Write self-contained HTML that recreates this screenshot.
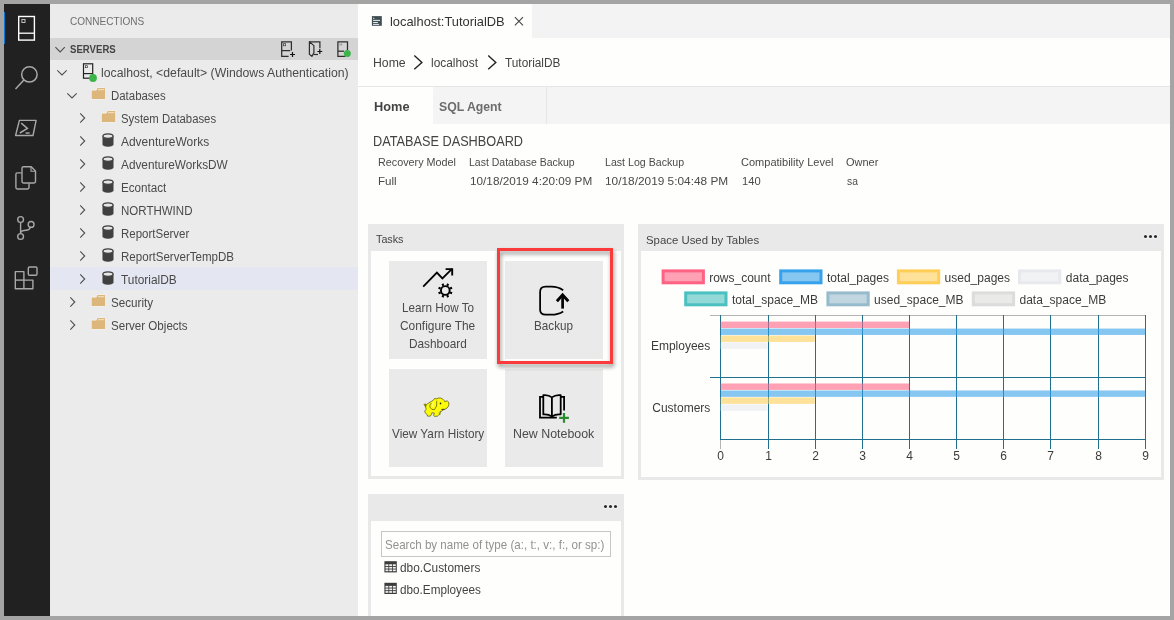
<!DOCTYPE html>
<html lang="en">
<head>
<meta charset="utf-8">
<title>Azure Data Studio - localhost:TutorialDB</title>
<style>
html,body{margin:0;padding:0;}
body{width:1174px;height:620px;overflow:hidden;background:#a4a4a4;font-family:"Liberation Sans",sans-serif;position:relative;}
#app{position:absolute;left:0;top:0;width:1174px;height:620px;overflow:hidden;}
.abs{position:absolute;}
.t{position:absolute;white-space:nowrap;line-height:20px;height:20px;transform-origin:0 50%;font-family:"Liberation Sans",sans-serif;}
svg{position:absolute;overflow:visible;}
</style>
</head>
<body>
<div id="app">
<div class="abs" style="left:4px;top:4px;width:1166px;height:612px;background:#fefefd;"></div>

<!-- activity bar -->
<div class="abs" style="left:4px;top:4px;width:46px;height:612px;background:#212121;"></div>
<div class="abs" style="left:4px;top:12px;width:1.3px;height:32px;background:#0a7ad6;"></div>
<svg width="46" height="300" style="left:4px;top:4px;" viewBox="4 4 46 300" fill="none">
  <!-- server (active) -->
  <rect x="18.7" y="16.5" width="15.7" height="23.6" stroke="#ffffff" stroke-width="1.4"/>
  <line x1="18.7" y1="33.2" x2="34.4" y2="33.2" stroke="#ffffff" stroke-width="1.3"/>
  <rect x="21.9" y="19.4" width="3.1" height="3.1" stroke="#d0d0d0" stroke-width="0.9"/>
  <!-- search -->
  <circle cx="29.4" cy="74.4" r="7.7" stroke="#a8a8a8" stroke-width="1.5"/>
  <line x1="23.9" y1="80" x2="15.5" y2="89" stroke="#a8a8a8" stroke-width="1.5"/>
  <!-- terminal -->
  <path d="M19.4 120.4 H36.1 L33 135.5 H15.6 Z" stroke="#a8a8a8" stroke-width="1.4" stroke-linejoin="round"/>
  <path d="M21.2 123.2 L27.4 128.3 L19.8 133" stroke="#a8a8a8" stroke-width="1.5"/>
  <line x1="25.6" y1="133" x2="29.6" y2="133" stroke="#a8a8a8" stroke-width="1.5"/>
  <!-- files -->
  <path d="M21.8 172.9 H17.3 Q15.9 172.9 15.9 174.3 V187.6 Q15.9 189 17.3 189 H27.6 Q29 189 29 187.6 V183.5" stroke="#a8a8a8" stroke-width="1.4"/>
  <path d="M23.4 166.8 H31.2 L35.5 171.1 V181.6 Q35.5 183 34.1 183 H23.4 Q22 183 22 181.6 V168.2 Q22 166.8 23.4 166.8 Z" stroke="#a8a8a8" stroke-width="1.4"/>
  <path d="M31 167 V171.3 H35.3" stroke="#a8a8a8" stroke-width="1.1"/>
  <!-- git -->
  <circle cx="20.6" cy="219.5" r="2.9" stroke="#a8a8a8" stroke-width="1.4"/>
  <circle cx="20.6" cy="236.5" r="2.9" stroke="#a8a8a8" stroke-width="1.4"/>
  <circle cx="31.1" cy="224.4" r="2.9" stroke="#a8a8a8" stroke-width="1.4"/>
  <line x1="20.6" y1="222.4" x2="20.6" y2="233.6" stroke="#a8a8a8" stroke-width="1.4"/>
  <path d="M30.3 227.3 Q29.6 230.2 26 230.3 Q21.5 230.5 20.6 232.4" stroke="#a8a8a8" stroke-width="1.4"/>
  <!-- extensions -->
  <path d="M15.3 271.6 H23.9 V280.1 H32.9 V288.7 H15.3 Z" stroke="#a8a8a8" stroke-width="1.4" stroke-linejoin="round"/>
  <line x1="15.3" y1="280.1" x2="23.9" y2="280.1" stroke="#a8a8a8" stroke-width="1.4"/>
  <line x1="23.9" y1="280.1" x2="23.9" y2="288.7" stroke="#a8a8a8" stroke-width="1.4"/>
  <rect x="28.3" y="267" width="8.7" height="8.2" rx="1.2" stroke="#a8a8a8" stroke-width="1.4"/>
</svg>

<!-- sidebar -->
<div class="abs" style="left:50px;top:4px;width:308px;height:612px;background:#ebebeb;"></div>
<div class="abs" style="left:50px;top:38px;width:308px;height:22px;background:#d4d4d4;"></div>
<div class="abs" style="left:50px;top:267px;width:308px;height:23px;background:#e4e6f1;"></div>
<svg width="308" height="612" style="left:50px;top:4px;" viewBox="50 4 308 612" fill="none">
<path d="M55.4 47.2 L60.1 52.0 L64.8 47.2" stroke="#4f4f4f" stroke-width="1.1" fill="none"/>
<path d="M291.4 50.4 V41.9 H281.7 V56.3 H288.6" stroke="#2e2e2e" stroke-width="1.25" fill="none"/>
<line x1="281.7" y1="50.6" x2="290.2" y2="50.6" stroke="#2e2e2e" stroke-width="1.25"/>
<rect x="283.6" y="43.7" width="2.1" height="2.1" stroke="#2e2e2e" stroke-width="0.6" fill="none"/>
<path d="M290 54.5 H295 M292.5 52 V57" stroke="#111" stroke-width="1.2"/>
<path d="M309.4 41.9 H319.9 V48.2" stroke="#2e2e2e" stroke-width="1.25" fill="none"/>
<path d="M309.4 41.7 L313.9 45.6 V52.8 L311.9 56.4 L309.4 54.3 Z" stroke="#2e2e2e" stroke-width="1.2" fill="none" stroke-linejoin="round"/>
<path d="M313.6 54.5 H318" stroke="#2e2e2e" stroke-width="1.2"/>
<path d="M317.4 51.5 H322.2 M319.8 49.1 V53.9" stroke="#111" stroke-width="1.2"/>
<path d="M345.4 56.4 H337.9 V41.9 H347.5 V50" stroke="#2e2e2e" stroke-width="1.25" fill="none"/>
<line x1="337.9" y1="51.2" x2="344" y2="51.2" stroke="#2e2e2e" stroke-width="1.25"/>
<path d="M340 43.6 V45.4 M341.6 43.6 V45.4" stroke="#555" stroke-width="0.6"/>
<circle cx="347.3" cy="53.6" r="3.5" fill="#3bb44a"/>
<path d="M57.3 70.4 L62.0 75.0 L66.7 70.4" stroke="#4f4f4f" stroke-width="1.1" fill="none"/>
<rect x="83.5" y="63.8" width="9.2" height="14.4" stroke="#232323" stroke-width="1.2" fill="none"/>
<line x1="83.5" y1="73.6" x2="92.7" y2="73.6" stroke="#232323" stroke-width="1.2"/>
<rect x="85.4" y="65.7" width="2" height="2" stroke="#232323" stroke-width="0.6" fill="none"/>
<circle cx="93" cy="78" r="3.9" fill="#3bb44a"/>
<path d="M67.3 93.4 L72.0 98.0 L76.7 93.4" stroke="#4f4f4f" stroke-width="1.1" fill="none"/>
<path d="M91.7 90.4 H96.3 L97.5 88.0 H105.1 V99.0 H91.7 Z" fill="#dcb67a" stroke="#f8f5ef" stroke-width="1.1" paint-order="stroke"/>
<line x1="98.1" y1="89.7" x2="104.3" y2="89.7" stroke="#f8ead2" stroke-width="0.9"/>
<path d="M80.2 113.4 L84.7 118.0 L80.2 122.6" stroke="#4f4f4f" stroke-width="1.1" fill="none"/>
<path d="M101.8 113.4 H106.4 L107.6 111.0 H115.2 V122.0 H101.8 Z" fill="#dcb67a" stroke="#f8f5ef" stroke-width="1.1" paint-order="stroke"/>
<line x1="108.2" y1="112.7" x2="114.4" y2="112.7" stroke="#f8ead2" stroke-width="0.9"/>
<path d="M80.2 136.4 L84.7 141.0 L80.2 145.6" stroke="#4f4f4f" stroke-width="1.1" fill="none"/>
<path d="M102.2 135.9 V144.3 A5.8 2.8 0 0 0 113.8 144.3 V135.9 Z" fill="#404040" stroke="#f0f0f0" stroke-width="0.5"/>
<ellipse cx="108.0" cy="136.1" rx="5.1" ry="2.3" fill="#e6e6e6" stroke="#404040" stroke-width="1.3"/>
<path d="M80.2 159.4 L84.7 164.0 L80.2 168.6" stroke="#4f4f4f" stroke-width="1.1" fill="none"/>
<path d="M102.2 158.9 V167.3 A5.8 2.8 0 0 0 113.8 167.3 V158.9 Z" fill="#404040" stroke="#f0f0f0" stroke-width="0.5"/>
<ellipse cx="108.0" cy="159.1" rx="5.1" ry="2.3" fill="#e6e6e6" stroke="#404040" stroke-width="1.3"/>
<path d="M80.2 182.4 L84.7 187.0 L80.2 191.6" stroke="#4f4f4f" stroke-width="1.1" fill="none"/>
<path d="M102.2 181.9 V190.3 A5.8 2.8 0 0 0 113.8 190.3 V181.9 Z" fill="#404040" stroke="#f0f0f0" stroke-width="0.5"/>
<ellipse cx="108.0" cy="182.1" rx="5.1" ry="2.3" fill="#e6e6e6" stroke="#404040" stroke-width="1.3"/>
<path d="M80.2 205.4 L84.7 210.0 L80.2 214.6" stroke="#4f4f4f" stroke-width="1.1" fill="none"/>
<path d="M102.2 204.9 V213.3 A5.8 2.8 0 0 0 113.8 213.3 V204.9 Z" fill="#404040" stroke="#f0f0f0" stroke-width="0.5"/>
<ellipse cx="108.0" cy="205.1" rx="5.1" ry="2.3" fill="#e6e6e6" stroke="#404040" stroke-width="1.3"/>
<path d="M80.2 228.4 L84.7 233.0 L80.2 237.6" stroke="#4f4f4f" stroke-width="1.1" fill="none"/>
<path d="M102.2 227.9 V236.3 A5.8 2.8 0 0 0 113.8 236.3 V227.9 Z" fill="#404040" stroke="#f0f0f0" stroke-width="0.5"/>
<ellipse cx="108.0" cy="228.1" rx="5.1" ry="2.3" fill="#e6e6e6" stroke="#404040" stroke-width="1.3"/>
<path d="M80.2 251.4 L84.7 256.0 L80.2 260.6" stroke="#4f4f4f" stroke-width="1.1" fill="none"/>
<path d="M102.2 250.9 V259.3 A5.8 2.8 0 0 0 113.8 259.3 V250.9 Z" fill="#404040" stroke="#f0f0f0" stroke-width="0.5"/>
<ellipse cx="108.0" cy="251.1" rx="5.1" ry="2.3" fill="#e6e6e6" stroke="#404040" stroke-width="1.3"/>
<path d="M80.2 274.4 L84.7 279.0 L80.2 283.6" stroke="#4f4f4f" stroke-width="1.1" fill="none"/>
<path d="M102.2 273.9 V282.3 A5.8 2.8 0 0 0 113.8 282.3 V273.9 Z" fill="#404040" stroke="#f0f0f0" stroke-width="0.5"/>
<ellipse cx="108.0" cy="274.1" rx="5.1" ry="2.3" fill="#e6e6e6" stroke="#404040" stroke-width="1.3"/>
<path d="M70.3 297.4 L74.8 302.0 L70.3 306.6" stroke="#4f4f4f" stroke-width="1.1" fill="none"/>
<path d="M91.7 297.4 H96.3 L97.5 295.0 H105.1 V306.0 H91.7 Z" fill="#dcb67a" stroke="#f8f5ef" stroke-width="1.1" paint-order="stroke"/>
<line x1="98.1" y1="296.7" x2="104.3" y2="296.7" stroke="#f8ead2" stroke-width="0.9"/>
<path d="M70.3 320.4 L74.8 325.0 L70.3 329.6" stroke="#4f4f4f" stroke-width="1.1" fill="none"/>
<path d="M91.7 320.4 H96.3 L97.5 318.0 H105.1 V329.0 H91.7 Z" fill="#dcb67a" stroke="#f8f5ef" stroke-width="1.1" paint-order="stroke"/>
<line x1="98.1" y1="319.7" x2="104.3" y2="319.7" stroke="#f8ead2" stroke-width="0.9"/>
</svg>

<!-- editor chrome -->
<div class="abs" style="left:358px;top:4px;width:812px;height:34px;background:#f3f3f3;"></div>
<div class="abs" style="left:358px;top:4px;width:174px;height:34px;background:#fefefd;"></div>
<div class="abs" style="left:358px;top:86px;width:812px;height:1px;background:#e6e6e6;"></div>
<div class="abs" style="left:358px;top:87px;width:812px;height:37px;background:#f4f4f4;"></div>
<div class="abs" style="left:358px;top:87px;width:75px;height:37px;background:#fefefd;"></div>
<div class="abs" style="left:546px;top:87px;width:1px;height:37px;background:#e6e6e6;"></div>
<svg width="812" height="120" style="left:358px;top:4px;" viewBox="358 4 812 120" fill="none">
  <!-- tab icon -->
  <rect x="371.9" y="16.1" width="9.9" height="9.7" fill="#3f4d54"/>
  <path d="M373.1 18.3 H374.4 M373.1 20.4 H380 M373.1 22.5 H377.8 M373.1 24.4 H379.1" stroke="#ffffff" stroke-width="0.9"/>
  <!-- close x -->
  <path d="M514.9 17.2 L523 25.3 M523 17.2 L514.9 25.3" stroke="#444" stroke-width="1.1"/>
  <!-- breadcrumb chevrons -->
  <path d="M414.3 55.6 L421.9 62.4 L414.3 69.2" stroke="#222" stroke-width="1.4"/>
  <path d="M488.2 55.6 L495.8 62.4 L488.2 69.2" stroke="#222" stroke-width="1.4"/>
</svg>

<!-- tasks card -->
<div class="abs" style="left:368px;top:224px;width:256px;height:255px;background:#e9e9e9;"></div>
<div class="abs" style="left:371px;top:251px;width:250px;height:225px;background:#fefefd;"></div>
<div class="abs" style="left:389px;top:261px;width:98px;height:98px;background:#eaeaea;"></div>
<div class="abs" style="left:505px;top:261px;width:98px;height:98px;background:#eaeaea;"></div>
<div class="abs" style="left:389px;top:369px;width:98px;height:98px;background:#eaeaea;"></div>
<div class="abs" style="left:505px;top:369px;width:98px;height:98px;background:#eaeaea;"></div>
<svg width="256" height="255" style="left:368px;top:224px;" viewBox="368 224 256 255" fill="none">
<path d="M423.2 286.6 L436.9 272.6 L442.4 278.4 L452 268.9" stroke="#000" stroke-width="1.8" fill="none" stroke-linejoin="miter"/>
<path d="M445.6 269.1 H452.2 V275.5" stroke="#000" stroke-width="1.9" fill="none"/>
<circle cx="445.3" cy="290.5" r="4.35" stroke="#000" stroke-width="1.9" fill="none"/>
<path d="M450.01 292.45 L452.04 293.29 M447.25 295.21 L448.09 297.24 M443.35 295.21 L442.51 297.24 M440.59 292.45 L438.56 293.29 M440.59 288.55 L438.56 287.71 M443.35 285.79 L442.51 283.76 M447.25 285.79 L448.09 283.76 M450.01 288.55 L452.04 287.71" stroke="#000" stroke-width="2.1"/>
<path d="M563.2 290.3 Q558 286.7 551.5 286.7 H545.6 Q540.1 286.7 540.1 292 V309.8 Q540.1 314.7 545.6 314.7 H551.5 Q558 314.7 563.2 311.4" stroke="#000" stroke-width="1.75" fill="none"/>
<path d="M562.6 308.6 V296" stroke="#000" stroke-width="2.7" fill="none"/>
<path d="M556.9 301.3 L562.6 294.9 L568.3 301.3" stroke="#000" stroke-width="2.9" fill="none" stroke-linejoin="miter"/>
<path d="M423.36 403.89 L426.07 403.44 L426.18 406.94 L424.94 406.71 Z" fill="#8a8a14"/>
<path d="M426.18 404.79 L428.27 403.27 L431.09 401.58 L433.18 400.39 L434.54 398.47 L436.74 398.81 L438.43 398.02 L440.69 398.02 L442.67 399.03 L444.08 400.45 L444.81 401.74 L445.94 401.07 L447.47 401.07 L448.65 402.14 L448.88 404.23 L448.31 406.37 L446.90 408.18 L444.93 409.25 L443.23 409.20 L441.99 409.54 L442.67 410.44 L441.54 411.34 L440.18 411.51 L440.30 412.70 L439.84 414.39 L438.72 414.96 L437.59 416.09 L434.48 416.43 L433.52 415.13 L434.48 413.26 L431.94 412.70 L431.37 414.39 L430.36 416.09 L427.70 416.20 L426.97 414.39 L425.05 412.70 L424.71 411.01 L426.18 409.31 L425.62 406.94 Z" fill="#fdfb0a" stroke="#4e4e08" stroke-width="0.7" stroke-linejoin="round"/>
<path d="M436.80 400.73 Q437.47 406.94 434.48 409.65 Q431.49 410.44 429.79 406.94 Q429.57 404.79 431.37 403.10" stroke="#4e4e08" stroke-width="0.7" fill="none"/>
<path d="M433.63 401.29 Q431.94 404.12 433.07 406.94" stroke="#fffdb0" stroke-width="0.8" fill="none"/>
<circle cx="440.52" cy="403.44" r="0.85" fill="#222"/>
<path d="M441.43 409.65 L444.47 409.54" stroke="#222" stroke-width="0.8"/>
<path d="M439.00 412.13 L439.84 414.39" stroke="#8a8a14" stroke-width="0.9"/>
<path d="M543.4 396.8 H540 V417.6 H556.8 M561 396.8 H564.1 V410.6" stroke="#000" stroke-width="1.8" fill="none"/>
<path d="M551.9 397.4 Q548.5 394.6 543.3 395.2 V414.4 Q548.5 413.9 551.9 416.6 Q555.4 413.9 560.7 414.4 V395.2 Q555.4 394.6 551.9 397.4 V416.4" stroke="#000" stroke-width="1.8" fill="none" stroke-linejoin="round"/>
<path d="M559.2 417.8 H568.9 M564 413 V422.7" stroke="#2b8a2b" stroke-width="2.2"/>
</svg>
<div class="abs" style="left:497px;top:248px;width:110px;height:110px;border:3px solid #fb3b3b;filter:drop-shadow(1.5px 3px 2.2px rgba(0,0,0,0.42));"></div>

<!-- chart card -->
<div class="abs" style="left:638px;top:224px;width:526px;height:256px;background:#e9e9e9;"></div>
<div class="abs" style="left:641px;top:251px;width:520px;height:226px;background:#fefefd;"></div>
<svg width="526" height="256" style="left:638px;top:224px;font-family:'Liberation Sans',sans-serif;will-change:transform;" viewBox="638 224 526 256">
<circle cx="1145.5" cy="236.45" r="1.55" fill="#2a2a2a" stroke="#f8f8f8" stroke-width="1.5" paint-order="stroke"/>
<circle cx="1150.5" cy="236.45" r="1.55" fill="#2a2a2a" stroke="#f8f8f8" stroke-width="1.5" paint-order="stroke"/>
<circle cx="1155.5" cy="236.45" r="1.55" fill="#2a2a2a" stroke="#f8f8f8" stroke-width="1.5" paint-order="stroke"/>
<rect x="663.1" y="270.9" width="40.3" height="11.9" fill="rgba(255,99,132,0.6)" stroke="rgb(255,99,132)" stroke-width="3"/>
<text x="709.2" y="282.0" font-size="12" fill="#3c3c3c">rows_count</text>
<rect x="780.7" y="270.9" width="40.3" height="11.9" fill="rgba(54,162,235,0.6)" stroke="rgb(54,162,235)" stroke-width="3"/>
<text x="826.9" y="282.0" font-size="12" fill="#3c3c3c">total_pages</text>
<rect x="898.4" y="270.9" width="40.3" height="11.9" fill="rgba(255,206,86,0.6)" stroke="rgb(255,206,86)" stroke-width="3"/>
<text x="944.6" y="282.0" font-size="12" fill="#3c3c3c">used_pages</text>
<rect x="1019.5" y="270.9" width="40.3" height="11.9" fill="rgba(231,233,237,0.6)" stroke="rgb(231,233,237)" stroke-width="3"/>
<text x="1065.8" y="282.0" font-size="12" fill="#3c3c3c">data_pages</text>
<rect x="685.7" y="292.9" width="40.3" height="11.9" fill="rgba(75,192,192,0.6)" stroke="rgb(75,192,192)" stroke-width="3"/>
<text x="731.9" y="304.2" font-size="12" fill="#3c3c3c">total_space_MB</text>
<rect x="827.9" y="292.9" width="40.3" height="11.9" fill="rgba(151,187,205,0.6)" stroke="rgb(151,187,205)" stroke-width="3"/>
<text x="874.1" y="304.2" font-size="12" fill="#3c3c3c">used_space_MB</text>
<rect x="973.3" y="292.9" width="40.3" height="11.9" fill="rgba(220,220,220,0.6)" stroke="rgb(220,220,220)" stroke-width="3"/>
<text x="1019.5" y="304.2" font-size="12" fill="#3c3c3c">data_space_MB</text>
<rect x="710" y="315" width="436" height="1" fill="#b4b4b4"/>
<rect x="710" y="377" width="436" height="1" fill="#1f6f8f"/>
<rect x="720" y="439" width="426" height="1" fill="#1f6f8f"/>
<rect x="720" y="315" width="1" height="125" fill="#1f6f8f"/>
<rect x="720" y="440" width="1" height="9" fill="#b4b4b4"/>
<text x="720.5" y="459.7" font-size="12" fill="#3c3c3c" text-anchor="middle">0</text>
<rect x="768" y="315" width="1" height="134" fill="#1f6f8f"/>
<text x="768.5" y="459.7" font-size="12" fill="#3c3c3c" text-anchor="middle">1</text>
<rect x="815" y="315" width="1" height="134" fill="#1f6f8f"/>
<text x="815.5" y="459.7" font-size="12" fill="#3c3c3c" text-anchor="middle">2</text>
<rect x="862" y="315" width="1" height="134" fill="#1f6f8f"/>
<text x="862.5" y="459.7" font-size="12" fill="#3c3c3c" text-anchor="middle">3</text>
<rect x="909" y="315" width="1" height="134" fill="#1f6f8f"/>
<text x="909.5" y="459.7" font-size="12" fill="#3c3c3c" text-anchor="middle">4</text>
<rect x="956" y="315" width="1" height="134" fill="#1f6f8f"/>
<text x="956.5" y="459.7" font-size="12" fill="#3c3c3c" text-anchor="middle">5</text>
<rect x="1003" y="315" width="1" height="134" fill="#1f6f8f"/>
<text x="1003.5" y="459.7" font-size="12" fill="#3c3c3c" text-anchor="middle">6</text>
<rect x="1050" y="315" width="1" height="134" fill="#1f6f8f"/>
<text x="1050.5" y="459.7" font-size="12" fill="#3c3c3c" text-anchor="middle">7</text>
<rect x="1098" y="315" width="1" height="134" fill="#1f6f8f"/>
<text x="1098.5" y="459.7" font-size="12" fill="#3c3c3c" text-anchor="middle">8</text>
<rect x="1145" y="315" width="1" height="134" fill="#1f6f8f"/>
<text x="1145.5" y="459.7" font-size="12" fill="#3c3c3c" text-anchor="middle">9</text>
<rect x="720.6" y="321.60" width="188.6" height="6.4" fill="rgba(255,99,132,0.6)"/>
<rect x="720.6" y="328.57" width="424.7" height="6.4" fill="rgba(54,162,235,0.6)"/>
<rect x="720.6" y="335.54" width="94.1" height="6.4" fill="rgba(255,206,86,0.6)"/>
<rect x="720.6" y="342.51" width="46.9" height="6.4" fill="rgba(231,233,237,0.6)"/>
<rect x="720.6" y="383.50" width="188.6" height="6.4" fill="rgba(255,99,132,0.6)"/>
<rect x="720.6" y="390.47" width="424.7" height="6.4" fill="rgba(54,162,235,0.6)"/>
<rect x="720.6" y="397.44" width="94.1" height="6.4" fill="rgba(255,206,86,0.6)"/>
<rect x="720.6" y="404.41" width="46.9" height="6.4" fill="rgba(231,233,237,0.6)"/>
<text x="710.3" y="350.1" font-size="12" fill="#3c3c3c" text-anchor="end">Employees</text>
<text x="710.3" y="411.9" font-size="12" fill="#3c3c3c" text-anchor="end">Customers</text>
</svg>

<!-- bottom card -->
<div class="abs" style="left:368px;top:494px;width:256px;height:122px;background:#e9e9e9;"></div>
<div class="abs" style="left:371px;top:521px;width:250px;height:95px;background:#fefefd;"></div>
<div class="abs" style="left:381px;top:531px;width:228px;height:24px;border:1px solid #c8c8c8;background:#fefefd;"></div>
<svg width="256" height="122" style="left:368px;top:494px;" viewBox="368 494 256 122" fill="none">
  <circle cx="605.5" cy="506.45" r="1.55" fill="#2a2a2a" stroke="#f8f8f8" stroke-width="1.5" paint-order="stroke"/><circle cx="610.5" cy="506.45" r="1.55" fill="#2a2a2a" stroke="#f8f8f8" stroke-width="1.5" paint-order="stroke"/><circle cx="615.5" cy="506.45" r="1.55" fill="#2a2a2a" stroke="#f8f8f8" stroke-width="1.5" paint-order="stroke"/>
  <g id="tbl1">
    <rect x="384.4" y="561.2" width="12.4" height="11.2" fill="#3c3c3c"/>
    <path d="M385.4 564.9 H395.8 M385.4 567.5 H395.8 M385.4 570.1 H395.8" stroke="#ffffff" stroke-width="0.0"/>
    <g fill="#f2f2f2">
      <rect x="385.5" y="564.3" width="2.9" height="1.7"/><rect x="389.2" y="564.3" width="2.9" height="1.7"/><rect x="392.9" y="564.3" width="2.9" height="1.7"/>
      <rect x="385.5" y="566.9" width="2.9" height="1.7"/><rect x="389.2" y="566.9" width="2.9" height="1.7"/><rect x="392.9" y="566.9" width="2.9" height="1.7"/>
      <rect x="385.5" y="569.5" width="2.9" height="1.7"/><rect x="389.2" y="569.5" width="2.9" height="1.7"/><rect x="392.9" y="569.5" width="2.9" height="1.7"/>
    </g>
  </g>
  <g transform="translate(0,21.6)">
    <rect x="384.4" y="561.2" width="12.4" height="11.2" fill="#3c3c3c"/>
    <g fill="#f2f2f2">
      <rect x="385.5" y="564.3" width="2.9" height="1.7"/><rect x="389.2" y="564.3" width="2.9" height="1.7"/><rect x="392.9" y="564.3" width="2.9" height="1.7"/>
      <rect x="385.5" y="566.9" width="2.9" height="1.7"/><rect x="389.2" y="566.9" width="2.9" height="1.7"/><rect x="392.9" y="566.9" width="2.9" height="1.7"/>
      <rect x="385.5" y="569.5" width="2.9" height="1.7"/><rect x="389.2" y="569.5" width="2.9" height="1.7"/><rect x="392.9" y="569.5" width="2.9" height="1.7"/>
    </g>
  </g>
</svg>

<!-- texts -->
<span class="t" id="t0" style="left:69.50px;top:11.0px;font-size:10.6px;color:#6f6f6f;transform:scaleX(0.9496);">CONNECTIONS</span>
<span class="t" id="t1" style="left:69.50px;top:39.0px;font-size:10.6px;color:#444444;font-weight:bold;transform:scaleX(0.9065);">SERVERS</span>
<span class="t" id="t2" style="left:100.50px;top:63.0px;font-size:12.0px;color:#4a4a4a;transform:scaleX(1.0201);">localhost, &lt;default&gt; (Windows Authentication)</span>
<span class="t" id="t3" style="left:110.60px;top:86.0px;font-size:12.0px;color:#4a4a4a;transform:scaleX(0.9525);">Databases</span>
<span class="t" id="t4" style="left:120.55px;top:109.0px;font-size:12.0px;color:#4a4a4a;transform:scaleX(0.9441);">System Databases</span>
<span class="t" id="t5" style="left:120.55px;top:132.0px;font-size:12.0px;color:#4a4a4a;transform:scaleX(0.9957);">AdventureWorks</span>
<span class="t" id="t6" style="left:120.55px;top:155.0px;font-size:12.0px;color:#4a4a4a;transform:scaleX(0.9843);">AdventureWorksDW</span>
<span class="t" id="t7" style="left:120.65px;top:178.0px;font-size:12.0px;color:#4a4a4a;transform:scaleX(0.9704);">Econtact</span>
<span class="t" id="t8" style="left:120.65px;top:201.0px;font-size:12.0px;color:#4a4a4a;transform:scaleX(0.9599);">NORTHWIND</span>
<span class="t" id="t9" style="left:120.65px;top:224.0px;font-size:12.0px;color:#4a4a4a;transform:scaleX(0.9575);">ReportServer</span>
<span class="t" id="t10" style="left:120.65px;top:247.0px;font-size:12.0px;color:#4a4a4a;transform:scaleX(0.9632);">ReportServerTempDB</span>
<span class="t" id="t11" style="left:120.55px;top:270.0px;font-size:12.0px;color:#4a4a4a;transform:scaleX(0.9893);">TutorialDB</span>
<span class="t" id="t12" style="left:110.55px;top:293.0px;font-size:12.0px;color:#4a4a4a;transform:scaleX(0.9719);">Security</span>
<span class="t" id="t13" style="left:110.55px;top:316.0px;font-size:12.0px;color:#4a4a4a;transform:scaleX(0.9656);">Server Objects</span>
<span class="t" id="t14" style="left:389.65px;top:11.8px;font-size:12.9px;color:#333333;transform:scaleX(0.9986);">localhost:TutorialDB</span>
<span class="t" id="t15" style="left:372.55px;top:52.5px;font-size:12.0px;color:#444444;transform:scaleX(1.0203);">Home</span>
<span class="t" id="t16" style="left:430.70px;top:52.5px;font-size:12.0px;color:#444444;transform:scaleX(0.9919);">localhost</span>
<span class="t" id="t17" style="left:504.50px;top:52.5px;font-size:12.0px;color:#444444;transform:scaleX(0.9854);">TutorialDB</span>
<span class="t" id="t18" style="left:373.60px;top:96.5px;font-size:12.4px;color:#444444;font-weight:bold;transform:scaleX(1.0307);">Home</span>
<span class="t" id="t19" style="left:438.55px;top:96.5px;font-size:12.4px;color:#6c6c6c;font-weight:bold;transform:scaleX(0.9900);">SQL Agent</span>
<span class="t" id="t20" style="left:372.70px;top:131.0px;font-size:14.2px;color:#444444;transform:scaleX(0.8962);">DATABASE DASHBOARD</span>
<span class="t" id="t21" style="left:377.65px;top:152.0px;font-size:10.6px;color:#4a4a4a;transform:scaleX(1.0184);">Recovery Model</span>
<span class="t" id="t22" style="left:377.60px;top:170.8px;font-size:11.8px;color:#4a4a4a;transform:scaleX(0.9795);">Full</span>
<span class="t" id="t23" style="left:468.65px;top:152.0px;font-size:10.6px;color:#4a4a4a;transform:scaleX(0.9915);">Last Database Backup</span>
<span class="t" id="t24" style="left:469.55px;top:170.8px;font-size:11.8px;color:#4a4a4a;transform:scaleX(0.9967);">10/18/2019 4:20:09 PM</span>
<span class="t" id="t25" style="left:604.70px;top:152.0px;font-size:10.6px;color:#4a4a4a;transform:scaleX(1.0016);">Last Log Backup</span>
<span class="t" id="t26" style="left:604.50px;top:170.8px;font-size:11.8px;color:#4a4a4a;transform:scaleX(1.0046);">10/18/2019 5:04:48 PM</span>
<span class="t" id="t27" style="left:740.60px;top:152.0px;font-size:10.6px;color:#4a4a4a;transform:scaleX(1.0405);">Compatibility Level</span>
<span class="t" id="t28" style="left:741.65px;top:170.8px;font-size:11.8px;color:#4a4a4a;transform:scaleX(0.9470);">140</span>
<span class="t" id="t29" style="left:845.65px;top:152.0px;font-size:10.6px;color:#4a4a4a;transform:scaleX(1.0369);">Owner</span>
<span class="t" id="t30" style="left:846.70px;top:170.8px;font-size:11.8px;color:#4a4a4a;transform:scaleX(0.8755);">sa</span>
<span class="t" id="t31" style="left:375.65px;top:229.3px;font-size:11.8px;color:#444444;transform:scaleX(0.9120);">Tasks</span>
<span class="t" id="t32" style="left:401.65px;top:298.4px;font-size:11.9px;color:#4a4a4a;transform:scaleX(0.9845);">Learn How To</span>
<span class="t" id="t33" style="left:399.50px;top:315.9px;font-size:11.9px;color:#4a4a4a;transform:scaleX(1.0011);">Configure The</span>
<span class="t" id="t34" style="left:408.55px;top:333.5px;font-size:11.9px;color:#4a4a4a;transform:scaleX(0.9939);">Dashboard</span>
<span class="t" id="t35" style="left:533.55px;top:316.0px;font-size:11.9px;color:#4a4a4a;transform:scaleX(0.9834);">Backup</span>
<span class="t" id="t36" style="left:391.55px;top:423.6px;font-size:11.9px;color:#4a4a4a;transform:scaleX(0.9901);">View Yarn History</span>
<span class="t" id="t37" style="left:512.55px;top:423.6px;font-size:11.9px;color:#4a4a4a;transform:scaleX(1.0425);">New Notebook</span>
<span class="t" id="t38" style="left:645.50px;top:229.6px;font-size:11.8px;color:#444444;transform:scaleX(0.9651);">Space Used by Tables</span>
<span class="t" id="t39" style="left:384.70px;top:535.0px;font-size:12.2px;color:#929292;transform:scaleX(0.9496);">Search by name of type (a:, t:, v:, f:, or sp:)</span>
<span class="t" id="t40" style="left:399.50px;top:558.2px;font-size:12.0px;color:#444444;transform:scaleX(0.9870);">dbo.Customers</span>
<span class="t" id="t41" style="left:399.50px;top:579.7px;font-size:12.0px;color:#444444;transform:scaleX(0.9767);">dbo.Employees</span>
</div>
</body>
</html>
